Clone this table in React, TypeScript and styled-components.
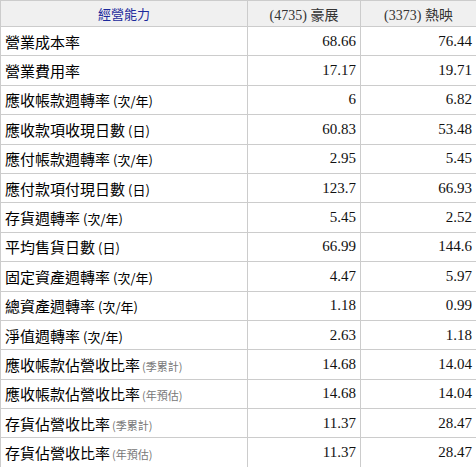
import React from "react";
import styled, { createGlobalStyle } from "styled-components";

const Global = createGlobalStyle`
  html, body { margin: 0; padding: 0; background: #fff; }
`;

const Table = styled.table`
  width: 476px;
  table-layout: fixed;
  border-collapse: collapse;
  border: 1px solid #cccccc;
`;

const HeadCell = styled.th<{ $blue?: boolean }>`
  height: 25px;
  padding: 0 4px;
  background: #f0f0f0;
  border: 1px solid #cccccc;
  font-weight: normal;
  text-align: center;
  vertical-align: middle;
  font-family: ${(p) =>
    p.$blue
      ? `"Noto Sans CJK TC", sans-serif`
      : `"Liberation Serif", "Noto Sans CJK TC", serif`};
  font-size: ${(p) => (p.$blue ? "13px" : "14px")};
  color: ${(p) => (p.$blue ? "#1c2a9c" : "#333333")};
`;

const Row = styled.tr`
  height: 29.4px;
`;

const Label = styled.td`
  padding: 0 4px;
  border: 1px solid #cccccc;
  font-family: "Noto Sans CJK TC", sans-serif;
  font-size: 15px;
  color: #000;
  white-space: nowrap;
  vertical-align: middle;
`;

const Note = styled.span<{ $small?: boolean }>`
  font-size: ${(p) => (p.$small ? "11px" : "13px")};
  color: ${(p) => (p.$small ? "#777777" : "#000")};
  margin-left: ${(p) => (p.$small ? "2px" : "3px")};
`;

const Num = styled.td`
  padding: 0 4px;
  border: 1px solid #cccccc;
  text-align: right;
  font-family: "Liberation Serif", serif;
  font-size: 15px;
  color: #111;
  vertical-align: middle;
`;

type R = { label: string; note?: string; small?: boolean; a: string; b: string };

const rows: R[] = [
  { label: "營業成本率", a: "68.66", b: "76.44" },
  { label: "營業費用率", a: "17.17", b: "19.71" },
  { label: "應收帳款週轉率", note: "(次/年)", a: "6", b: "6.82" },
  { label: "應收款項收現日數", note: "(日)", a: "60.83", b: "53.48" },
  { label: "應付帳款週轉率", note: "(次/年)", a: "2.95", b: "5.45" },
  { label: "應付款項付現日數", note: "(日)", a: "123.7", b: "66.93" },
  { label: "存貨週轉率", note: "(次/年)", a: "5.45", b: "2.52" },
  { label: "平均售貨日數", note: "(日)", a: "66.99", b: "144.6" },
  { label: "固定資產週轉率", note: "(次/年)", a: "4.47", b: "5.97" },
  { label: "總資產週轉率", note: "(次/年)", a: "1.18", b: "0.99" },
  { label: "淨值週轉率", note: "(次/年)", a: "2.63", b: "1.18" },
  { label: "應收帳款佔營收比率", note: "(季累計)", small: true, a: "14.68", b: "14.04" },
  { label: "應收帳款佔營收比率", note: "(年預估)", small: true, a: "14.68", b: "14.04" },
  { label: "存貨佔營收比率", note: "(季累計)", small: true, a: "11.37", b: "28.47" },
  { label: "存貨佔營收比率", note: "(年預估)", small: true, a: "11.37", b: "28.47" },
];

export default function App() {
  return (
    <>
      <Global />
      <Table>
        <colgroup>
          <col style={{ width: 247 }} />
          <col style={{ width: 113 }} />
          <col style={{ width: 116 }} />
        </colgroup>
        <thead>
          <tr>
            <HeadCell $blue>經營能力</HeadCell>
            <HeadCell>(4735) 豪展</HeadCell>
            <HeadCell>(3373) 熱映</HeadCell>
          </tr>
        </thead>
        <tbody>
          {rows.map((r, i) => (
            <Row key={i}>
              <Label>
                {r.label}
                {r.note && <Note $small={r.small}>{r.note}</Note>}
              </Label>
              <Num>{r.a}</Num>
              <Num>{r.b}</Num>
            </Row>
          ))}
        </tbody>
      </Table>
    </>
  );
}
